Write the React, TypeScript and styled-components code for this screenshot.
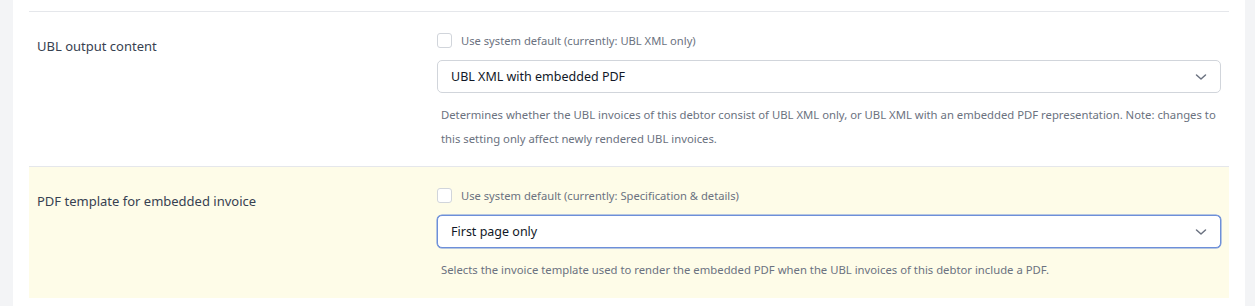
import React from "react";
import styled, { createGlobalStyle } from "styled-components";

const GlobalStyle = createGlobalStyle`
  html, body {
    margin: 0;
    padding: 0;
    background: #f3f4f6;
    font-family: "Noto Sans", "Open Sans", Arial, sans-serif;
  }
`;

const Page = styled.div`
  display: flex;
  width: 1255px;
  height: 306px;
  overflow: hidden;
  background: #f3f4f6;
`;

const Panel = styled.div`
  margin-left: 13px;
  width: 1232px;
  height: 306px;
  background: #ffffff;
  padding: 0 16px;
  box-sizing: border-box;
`;

const Row = styled.div<{ $highlight?: boolean }>`
  display: grid;
  grid-template-columns: 400px 1fr;
  padding: 20px 8px 15px 8px;
  border-top: 1px solid #e5e7eb;
  margin-top: 11px;
  background: ${(p) => (p.$highlight ? "#fefce8" : "transparent")};
  & + & {
    margin-top: 0;
    padding-bottom: 16px;
  }
`;

const Label = styled.div`
  font-size: 13px;
  line-height: 20px;
  color: #374151;
  padding-top: 4px;
`;

const Field = styled.div`
  display: flex;
  flex-direction: column;
`;

const CheckLine = styled.label`
  display: flex;
  align-items: center;
  gap: 9px;
  height: 16px;
  font-size: 11.2px;
  color: #6b7280;
`;

const Box = styled.span`
  width: 13px;
  height: 13px;
  border: 1px solid #d1d5db;
  border-radius: 3px;
  background: #ffffff;
  flex: none;
`;

const Select = styled.div<{ $focused?: boolean }>`
  margin-top: 12px;
  height: 33px;
  box-sizing: border-box;
  display: flex;
  align-items: center;
  justify-content: space-between;
  padding: 0 9px 0 13px;
  background: #ffffff;
  border: 1px solid ${(p) => (p.$focused ? "#6d8fd9" : "#d1d5db")};
  box-shadow: ${(p) => (p.$focused ? "0 0 0 0.5px #6d8fd9" : "none")};
  border-radius: 5px;
  font-size: 12.5px;
  color: #111827;
`;

const Help = styled.p`
  margin: 10px 0 0 0;
  padding: 0 0 0 4px;
  font-size: 11.3px;
  line-height: 24px;
  color: #6b7280;
`;

const Chevron = () => (
  <svg width="20" height="20" viewBox="0 0 20 20" fill="none">
    <path d="M5.5 8 10 12l4.5-4" stroke="#6b7280" strokeWidth="1.5" strokeLinecap="round" strokeLinejoin="round" />
  </svg>
);

const settings = [
  {
    label: "UBL output content",
    check: "Use system default (currently: UBL XML only)",
    value: "UBL XML with embedded PDF",
    help: "Determines whether the UBL invoices of this debtor consist of UBL XML only, or UBL XML with an embedded PDF representation. Note: changes to this setting only affect newly rendered UBL invoices.",
    highlight: false,
  },
  {
    label: "PDF template for embedded invoice",
    check: "Use system default (currently: Specification & details)",
    value: "First page only",
    help: "Selects the invoice template used to render the embedded PDF when the UBL invoices of this debtor include a PDF.",
    highlight: true,
  },
];

export default function App() {
  return (
    <Page>
      <GlobalStyle />
      <Panel>
        {settings.map((s) => (
          <Row key={s.label} $highlight={s.highlight}>
            <Label>{s.label}</Label>
            <Field>
              <CheckLine>
                <Box />
                {s.check}
              </CheckLine>
              <Select $focused={s.highlight}>
                <span>{s.value}</span>
                <Chevron />
              </Select>
              <Help>{s.help}</Help>
            </Field>
          </Row>
        ))}
      </Panel>
    </Page>
  );
}
